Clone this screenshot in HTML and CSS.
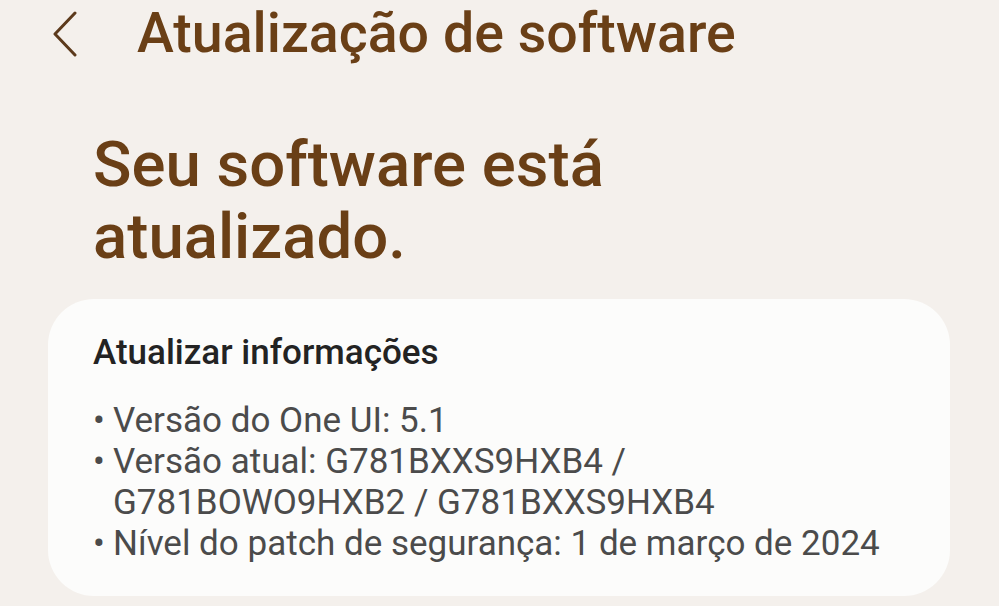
FILE: index.html
```html
<!DOCTYPE html>
<html lang="pt">
<head>
    <meta charset="UTF-8">
    <meta name="viewport" content="width=device-width, initial-scale=1.0">
    <link rel="stylesheet" href="styles.css">
    <title>Atualização de software</title>
</head>
<body>

    <!-- Barra superior -->
    <div class="top-bar">
        <button class="back-button" aria-label="Voltar">
            <svg width="26" height="46" viewBox="0 0 26 46">
                <path d="M23 2 L3 23 L23 44" fill="none" stroke="#5c3a1c" stroke-width="3" stroke-linecap="round" stroke-linejoin="round"/>
            </svg>
        </button>
        <h1 class="page-title">Atualização de software</h1>
    </div>

    <h2 class="status">Seu software está atualizado.</h2>

    <!-- Cartão com as informações -->
    <div class="info-card">
        <h3 class="card-title">Atualizar informações</h3>
        <ul class="info-list">
            <li><span class="dot">•</span><span>Versão do One UI: 5.1</span></li>
            <li><span class="dot">•</span><span>Versão atual: G781BXXS9HXB4 / G781BOWO9HXB2 / G781BXXS9HXB4</span></li>
            <li><span class="dot">•</span><span>Nível do patch de segurança: 1 de março de 2024</span></li>
        </ul>
    </div>

</body>
</html>
```

FILE: styles.css
```css
body {
    margin: 0;
    background-color: #f4f0ec;
    font-family: Roboto, "Noto Sans", sans-serif;
    overflow: hidden;
}

/* Barra superior */
.top-bar {
    display: flex;
    align-items: center;
    height: 66px;
    padding: 1px 0 0 52px;
}

.back-button {
    background: none;
    border: none;
    padding: 0;
    width: 85px;
    height: 46px;
    display: flex;
    align-items: center;
    cursor: pointer;
}

.page-title {
    margin: 0;
    font-size: 55.5px;
    font-weight: 500;
    color: #6a3f16;
    line-height: 66px;
}

/* Texto de estado */
.status {
    margin: 62px 0 0 93px;
    max-width: 620px;
    font-size: 63.5px;
    font-weight: 500;
    line-height: 72px;
    color: #6a3f16;
}

/* Cartão */
.info-card {
    margin: 26px 49px 0 48px;
    background-color: #fcfcfb;
    border-radius: 46px;
    padding: 32px 45px 32px 45px;
}

.card-title {
    margin: 0;
    font-size: 35px;
    font-weight: 500;
    line-height: 44px;
    color: #232323;
}

.info-list {
    list-style: none;
    margin: 25px 0 0 0;
    padding: 0;
    font-size: 35px;
    line-height: 41px;
    color: #4b4b4b;
}

.info-list li {
    display: flex;
}

.dot {
    width: 20px;
    flex-shrink: 0;
}
```
